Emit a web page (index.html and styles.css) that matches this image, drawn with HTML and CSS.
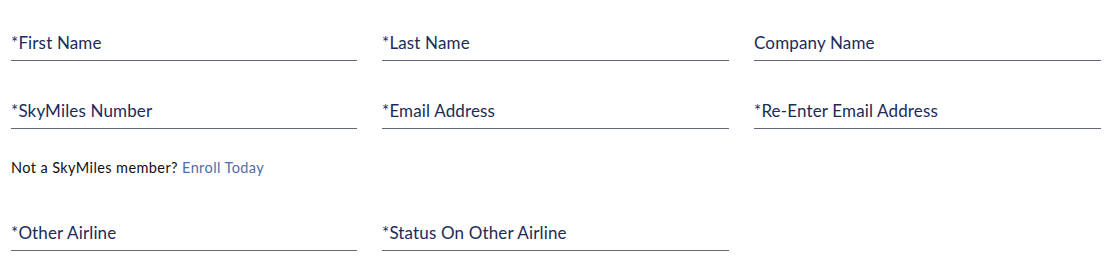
FILE: index.html
```html
<!DOCTYPE html>
<html lang="en">
<head>
<meta charset="utf-8">
<title>SkyMiles Form</title>
<link rel="stylesheet" href="styles.css">
</head>
<body>
<form class="form">
  <div class="grid">
    <div class="field"><span class="label">*First Name</span></div>
    <div class="field"><span class="label">*Last Name</span></div>
    <div class="field"><span class="label">Company Name</span></div>
    <div class="field"><span class="label">*SkyMiles Number</span></div>
    <div class="field"><span class="label">*Email Address</span></div>
    <div class="field"><span class="label">*Re-Enter Email Address</span></div>
  </div>
  <p class="note">Not a SkyMiles member? <a class="link" href="#">Enroll Today</a></p>
  <div class="grid">
    <div class="field"><span class="label">*Other Airline</span></div>
    <div class="field"><span class="label">*Status On Other Airline</span></div>
  </div>
</form>
</body>
</html>
```
FILE: styles.css
```css
* { box-sizing: border-box; }
html, body { margin: 0; padding: 0; background: #fff; }
body { font-family: Lato, "Open Sans", Arial, sans-serif; }
.form {
  width: 1090px;
  margin-left: 11px;
  padding-top: 33px;
}
.grid {
  display: grid;
  grid-template-columns: 346px 347px 347px;
  column-gap: 25px;
  row-gap: 40px;
}
.field {
  border-bottom: 1px solid #636878;
  padding: 0 0 7px 0;
}
.label {
  display: block;
  font-size: 17px;
  letter-spacing: 0.15px;
  line-height: 20px;
  color: #1c2b59;
}
.note {
  margin: 29px 0 45px 0;
  font-size: 14.5px;
  letter-spacing: 0.4px;
  line-height: 20px;
  color: #111;
}
.link {
  color: #4d6fa6;
  text-decoration: none;
}
```
